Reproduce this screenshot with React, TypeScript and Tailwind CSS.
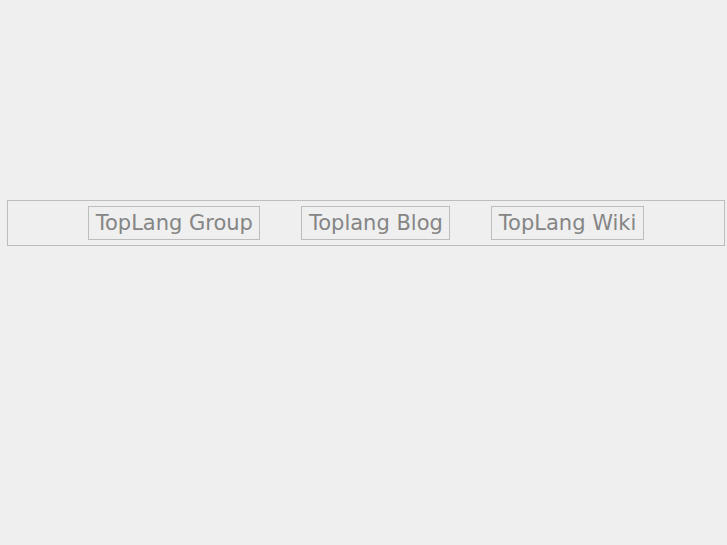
export default function App() {
  const items = ["TopLang Group", "Toplang Blog", "TopLang Wiki"];
  return (
    <div className="min-h-[545px] w-full bg-[#efefef] pt-[200px]" style={{ fontFamily: '"DejaVu Sans", sans-serif' }}>
      <div className="ml-[7px] flex h-[46px] w-[718px] items-center justify-center gap-[41px] border border-[#bdbdbd]">
        {items.map((t) => (
          <div key={t} className="flex h-[34px] items-center border border-[#bdbdbd] px-[6.5px] pt-[2px] text-[21px] text-[#858585]">
            {t}
          </div>
        ))}
      </div>
    </div>
  );
}
